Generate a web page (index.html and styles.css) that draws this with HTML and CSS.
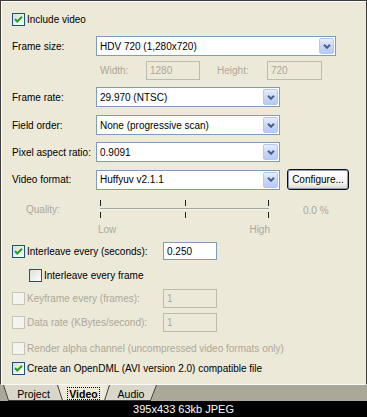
FILE: index.html
```html
<!DOCTYPE html>
<html>
<head>
<meta charset="utf-8">
<title>Video</title>
<link rel="stylesheet" href="styles.css">
</head>
<body>
<div class="panel">
  <div class="row r-include">
    <label class="check"><span class="box"><svg width="11" height="11" viewBox="0 0 11 11"><polyline points="2,5 4.3,7.5 9,2.8" fill="none" stroke="#21A121" stroke-width="2"/></svg></span>Include video</label>
  </div>

  <div class="row r-framesize">
    <span class="lbl">Frame size:</span>
    <div class="combo wide"><span class="val">HDV 720 (1,280x720)</span><span class="arrow"><svg width="8" height="5" viewBox="0 0 8 5"><polyline points="1,0.8 4,3.8 7,0.8" fill="none" stroke="#4D6185" stroke-width="2"/></svg></span></div>
  </div>

  <div class="row r-wh">
    <span class="wlbl dis">Width:</span>
    <div class="tin dis w54">1280</div>
    <span class="hlbl dis">Height:</span>
    <div class="tin dis w55">720</div>
  </div>

  <div class="row r-framerate">
    <span class="lbl">Frame rate:</span>
    <div class="combo std"><span class="val">29.970 (NTSC)</span><span class="arrow"><svg width="8" height="5" viewBox="0 0 8 5"><polyline points="1,0.8 4,3.8 7,0.8" fill="none" stroke="#4D6185" stroke-width="2"/></svg></span></div>
  </div>

  <div class="row r-field">
    <span class="lbl">Field order:</span>
    <div class="combo std"><span class="val">None (progressive scan)</span><span class="arrow"><svg width="8" height="5" viewBox="0 0 8 5"><polyline points="1,0.8 4,3.8 7,0.8" fill="none" stroke="#4D6185" stroke-width="2"/></svg></span></div>
  </div>

  <div class="row r-pixel">
    <span class="lbl">Pixel aspect ratio:</span>
    <div class="combo std"><span class="val">0.9091</span><span class="arrow"><svg width="8" height="5" viewBox="0 0 8 5"><polyline points="1,0.8 4,3.8 7,0.8" fill="none" stroke="#4D6185" stroke-width="2"/></svg></span></div>
  </div>

  <div class="row r-format">
    <span class="lbl">Video format:</span>
    <div class="combo std"><span class="val">Huffyuv v2.1.1</span><span class="arrow"><svg width="8" height="5" viewBox="0 0 8 5"><polyline points="1,0.8 4,3.8 7,0.8" fill="none" stroke="#4D6185" stroke-width="2"/></svg></span></div>
    <button class="btn">Configure...</button>
  </div>

  <div class="row r-quality">
    <span class="qlbl dis">Quality:</span>
    <svg class="slider" width="170" height="20" viewBox="0 0 170 20">
      <line x1="0" y1="9.5" x2="169" y2="9.5" stroke="#A7A69C" stroke-width="1"/>
      <line x1="0" y1="10.5" x2="169" y2="10.5" stroke="#F7F6F0" stroke-width="1"/>
      <line x1="0.5" y1="1" x2="0.5" y2="7" stroke="#222" />
      <line x1="0.5" y1="13" x2="0.5" y2="19" stroke="#222" />
      <line x1="85.5" y1="1" x2="85.5" y2="7" stroke="#222" />
      <line x1="85.5" y1="13" x2="85.5" y2="19" stroke="#222" />
      <line x1="168.5" y1="1" x2="168.5" y2="7" stroke="#222" />
      <line x1="168.5" y1="13" x2="168.5" y2="19" stroke="#222" />
    </svg>
    <span class="pct dis">0.0 %</span>
  </div>

  <div class="row r-lowhigh">
    <div class="lowhigh dis"><span>Low</span><span>High</span></div>
  </div>

  <div class="row r-isec">
    <label class="check cw"><span class="box"><svg width="11" height="11" viewBox="0 0 11 11"><polyline points="2,5 4.3,7.5 9,2.8" fill="none" stroke="#21A121" stroke-width="2"/></svg></span>Interleave every (seconds):</label>
    <div class="tin w54 h18">0.250</div>
  </div>

  <div class="row r-iframe">
    <label class="check indent"><span class="box"></span>Interleave every frame</label>
  </div>

  <div class="row r-key">
    <label class="check cw dis"><span class="box off"></span>Keyframe every (frames):</label>
    <div class="tin dis w54">1</div>
  </div>

  <div class="row r-rate">
    <label class="check cw dis"><span class="box off"></span>Data rate (KBytes/second):</label>
    <div class="tin dis w54">1</div>
  </div>

  <div class="row r-alpha">
    <label class="check dis"><span class="box off"></span>Render alpha channel (uncompressed video formats only)</label>
  </div>

  <div class="row r-odml">
    <label class="check"><span class="box"><svg width="11" height="11" viewBox="0 0 11 11"><polyline points="2,5 4.3,7.5 9,2.8" fill="none" stroke="#21A121" stroke-width="2"/></svg></span>Create an OpenDML (AVI version 2.0) compatible file</label>
  </div>
</div>

<div class="tabs">
  <svg class="tabshape" width="367" height="16" viewBox="0 0 367 16">
    <polygon points="3,0 66,0 61,16 8,16" fill="#D9D6CA"/>
    <polygon points="101,0 157,0 151,16 106,16" fill="#D9D6CA"/>
    <polygon points="57,0 110,0 105,16 62,16" fill="#ECE9D8"/>
    <line x1="3.5" y1="0" x2="8.5" y2="15.5" stroke="#3a3a3a"/>
    <line x1="8" y1="15.5" x2="62" y2="15.5" stroke="#3a3a3a"/>
    <line x1="57.5" y1="0" x2="62.5" y2="15.5" stroke="#3a3a3a"/>
    <line x1="62" y1="15.5" x2="105" y2="15.5" stroke="#3a3a3a"/>
    <line x1="109.5" y1="0" x2="104.5" y2="15.5" stroke="#3a3a3a"/>
    <line x1="105" y1="15.5" x2="151" y2="15.5" stroke="#3a3a3a"/>
    <line x1="156.5" y1="0" x2="150.5" y2="15.5" stroke="#3a3a3a"/>
  </svg>
  <span class="tab t1">Project</span>
  <span class="tab t2">Video</span>
  <span class="tab t3">Audio</span>
</div>

<div class="caption">395x433 63kb JPEG</div>
</body>
</html>
```

FILE: styles.css
```css
* { box-sizing: border-box; }
html, body { margin: 0; padding: 0; }
body {
  width: 367px;
  height: 417px;
  overflow: hidden;
  background: #000;
  font-family: "Liberation Sans", Arial, sans-serif;
  font-size: 10px;
  color: #000;
}

.panel {
  height: 385px;
  background: #ECE9D8;
  border: 1px solid #3c3c3c;
  border-bottom: 1px solid #FAFAF6;
  box-shadow: inset 1px 1px 0 #FFFFFF;
  padding-left: 11px;
  display: flex;
  flex-direction: column;
}

.row { display: flex; align-items: center; flex: none; }

.r-include  { margin-top: 12px; height: 13px; }
.r-framesize{ margin-top: 10px; height: 20px; }
.r-wh       { margin-top: 5px;  height: 19px; padding-left: 88px; }
.r-framerate{ margin-top: 7px;  height: 20px; }
.r-field    { margin-top: 8px;  height: 20px; }
.r-pixel    { margin-top: 7px;  height: 20px; }
.r-format   { margin-top: 7px;  height: 21px; }
.r-quality  { margin-top: 9px;  height: 20px; }
.r-lowhigh  { margin-top: 4px;  height: 12px; }
.r-isec     { margin-top: 7px;  height: 18px; }
.r-iframe   { margin-top: 9px;  height: 13px; }
.r-key      { margin-top: 7px;  height: 19px; }
.r-rate     { margin-top: 5px;  height: 19px; }
.r-alpha    { margin-top: 10px; height: 13px; }
.r-odml     { margin-top: 7px;  height: 13px; }

.dis { color: #ACA899; }

.lbl { width: 84px; white-space: nowrap; }

/* combo boxes */
.combo {
  height: 20px;
  background: #FFFFFF;
  border: 1px solid #7F9DB9;
  display: flex;
  align-items: center;
  padding-left: 3px;
}
.combo.wide { width: 240px; }
.combo.std  { width: 184px; }
.combo .val { flex: 1; white-space: nowrap; }
.arrow {
  width: 15px;
  height: 16px;
  margin-right: 1px;
  border: 1px solid #B5C7F0;
  border-radius: 2px;
  background: linear-gradient(#E6EEFE, #C4D5FA 60%, #B7CBF5);
  display: flex;
  align-items: center;
  justify-content: center;
}
.arrow svg { display: block; }

/* text inputs */
.tin {
  height: 19px;
  border: 1px solid #7F9DB9;
  background: #FFFFFF;
  padding-left: 3px;
  display: flex;
  align-items: center;
  white-space: nowrap;
}
.tin.dis { border-color: #BDBBAE; background: #ECE9D8; }
.tin.h18 { height: 18px; }
.w54 { width: 54px; }
.w55 { width: 55px; }

.wlbl { width: 46px; }
.hlbl { width: 50px; margin-left: 17px; }

/* button */
.btn {
  margin-left: 7px;
  width: 62px;
  height: 21px;
  padding: 0;
  font-family: inherit;
  font-size: 10px;
  color: #000;
  border: 1px solid #0A0F18;
  border-radius: 3px;
  background: linear-gradient(#FFFFFF, #F4F3EE 70%, #DCD8CC);
  box-shadow: inset 0 0 0 1px #8C9BB8;
}

/* quality slider */
.qlbl { width: 74px; margin-left: 14px; }
.slider { display: block; }
.pct { margin-left: 33px; margin-top: 3px; }
.lowhigh {
  margin-left: 86px;
  width: 172px;
  display: flex;
  justify-content: space-between;
}

/* checkboxes */
.check {
  display: flex;
  align-items: center;
  white-space: nowrap;
}
.check.cw { width: 151px; }
.check.indent { margin-left: 17px; }
.box {
  width: 13px;
  height: 13px;
  margin-right: 2px;
  border: 1px solid #1C5180;
  background: linear-gradient(135deg, #DCDCD7, #FFFFFF);
  display: flex;
  align-items: center;
  justify-content: center;
  flex: none;
}
.box.off { border-color: #C6C4B8; background: #F4F3EF; }
.box svg { display: block; }

/* bottom tabs */
.tabs {
  position: relative;
  height: 16px;
  background: #ACA899;
  display: flex;
  align-items: flex-start;
}
.tabshape { position: absolute; left: 0; top: 0; }
.tab {
  position: relative;
  height: 13px;
  margin-top: 2px;
  display: flex;
  align-items: center;
  justify-content: center;
  font-size: 10.5px;
  white-space: nowrap;
}
.t1 { margin-left: 16px; width: 35px; }
.t2 { margin-left: 16px; width: 33px; font-weight: bold; border: 1px dotted #000; }
.t3 { margin-left: 15px; width: 32px; }

.caption {
  height: 16px;
  line-height: 16px;
  color: #FFFFFF;
  font-size: 11px;
  text-align: center;
}
```
